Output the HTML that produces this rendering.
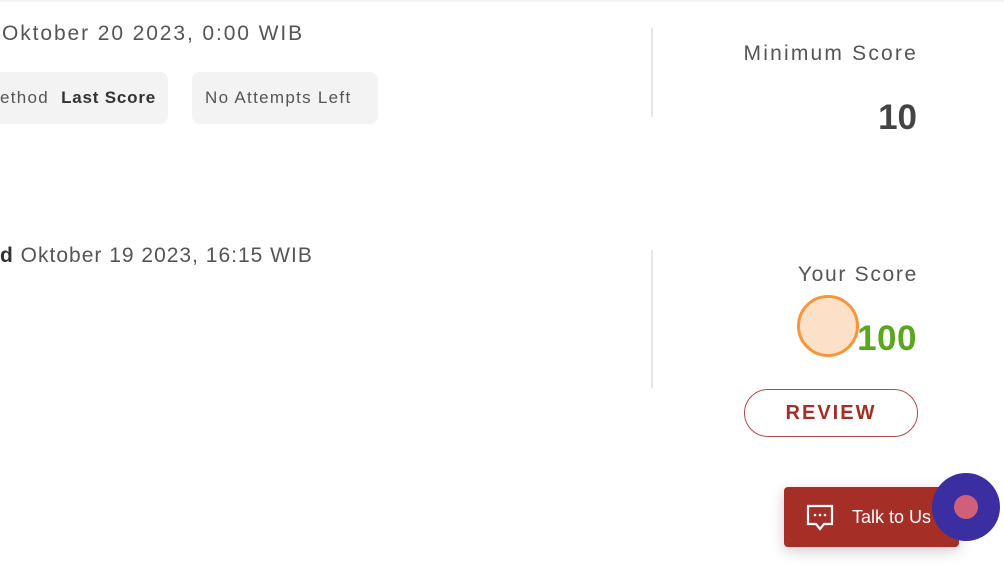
<!DOCTYPE html>
<html><head><style>
body{margin:0;width:1004px;height:565px;background:#fff;font-family:"Liberation Sans",sans-serif;color:#444;position:relative;overflow:hidden}
.a{position:absolute;white-space:nowrap}
.pill{position:absolute;background:#f3f3f3;border-radius:8px;font-size:17px;letter-spacing:1.3px;color:#555;line-height:52px}
.vl{position:absolute;left:651px;width:2px;background:#e6e6e6}
.t{font-size:21px;letter-spacing:1.6px;color:#555}
</style></head><body>
<div class="a" style="left:0;top:0;width:1004px;height:2px;background:#f4f4f4"></div>
<div class="a t" style="left:2px;top:22px;letter-spacing:1.9px">Oktober 20 2023, 0:00 WIB</div>
<div class="pill" style="left:-10px;top:72px;width:178px;height:52px"><span style="padding-left:10px">ethod&nbsp;&nbsp;<b style="color:#333;letter-spacing:0.8px">Last Score</b></span></div>
<div class="pill" style="left:192px;top:72px;width:186px;height:52px"><span style="padding-left:13px">No Attempts Left</span></div>
<div class="vl" style="top:28px;height:89px"></div>
<div class="a t" style="right:86px;top:42px;letter-spacing:2.2px">Minimum Score</div>
<div class="a" style="right:87px;top:98px;font-size:35px;font-weight:bold;color:#444">10</div>
<div class="a t" style="left:0;top:244px;letter-spacing:1px"><b style="color:#333">d</b> Oktober 19 2023, 16:15 WIB</div>
<div class="vl" style="top:250px;height:138px"></div>
<div class="a t" style="right:86px;top:263px;letter-spacing:1.7px">Your Score</div>
<div class="a" style="right:87px;top:319px;font-size:35px;font-weight:bold;color:#5aa61e;letter-spacing:0.5px">100</div>
<div class="a" style="left:797px;top:295px;width:62px;height:62px;border:3px solid #f7953a;border-radius:50%;background:#fde0c8;box-sizing:border-box"></div>
<div class="a" style="left:744px;top:389px;width:174px;height:48px;border:1px solid #b54a42;border-radius:24px;box-sizing:border-box;text-align:center;line-height:46px;font-size:20px;font-weight:bold;letter-spacing:2px;color:#a52f27">REVIEW</div>
<div class="a" style="left:784px;top:487px;width:175px;height:60px;background:#a52f27;border-radius:4px;box-shadow:0 4px 14px rgba(0,0,0,.2)">
<svg style="position:absolute;left:22px;top:17px" width="28" height="27" viewBox="0 0 28 27"><path d="M2 2h24v18H18l-4 5-4-5H2z" fill="none" stroke="#fff" stroke-width="2.2"/><circle cx="9" cy="11" r="1.3" fill="#fff"/><circle cx="14" cy="11" r="1.3" fill="#fff"/><circle cx="19" cy="11" r="1.3" fill="#fff"/></svg>
<div class="a" style="left:68px;top:20px;font-size:18px;color:#fff">Talk to Us</div></div>
<div class="a" style="left:932px;top:473px;width:68px;height:68px;border-radius:50%;background:#3a2ea0"><div class="a" style="left:22px;top:22px;width:24px;height:24px;border-radius:50%;background:#d0607a"></div></div>
</body></html>
